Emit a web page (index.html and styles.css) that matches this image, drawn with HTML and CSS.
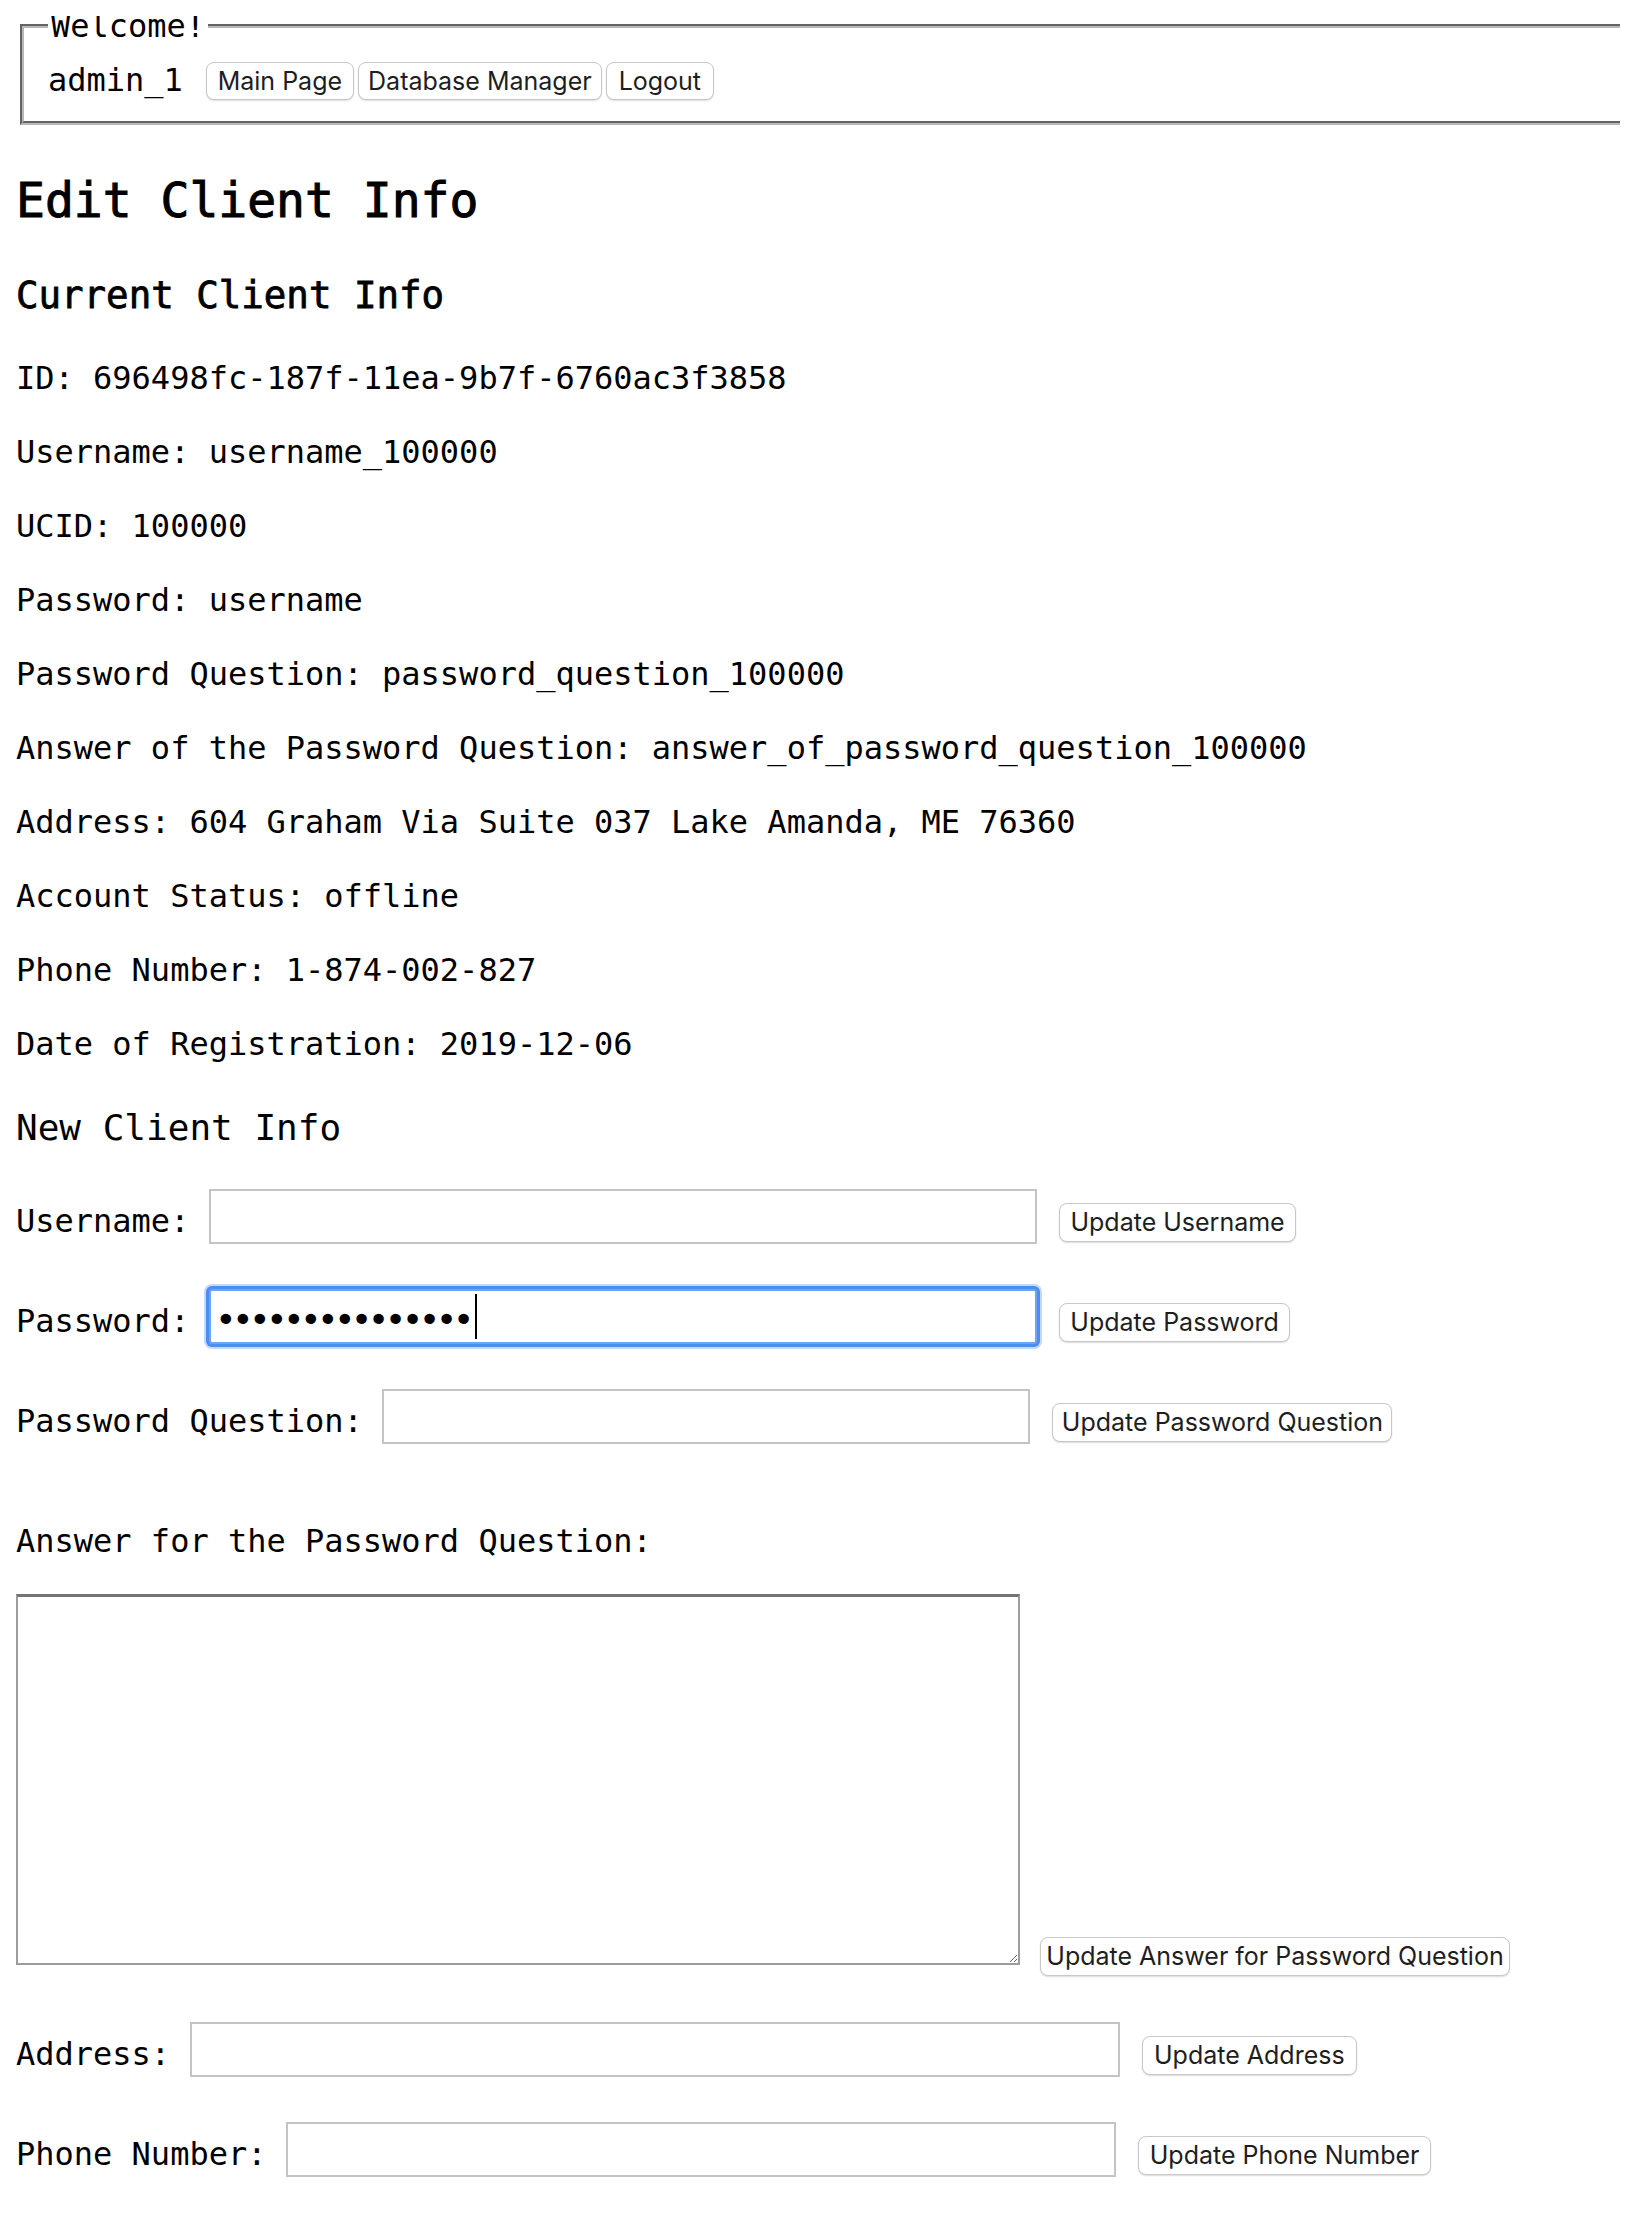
FILE: index.html
```html
<!DOCTYPE html>
<html lang="en">
<head>
<meta charset="utf-8">
<title>Edit Client Info</title>
<link rel="stylesheet" href="styles.css">
</head>
<body>
<fieldset class="welcome">
  <legend>Welcome!</legend>
  <div class="welcome-row">
    <span class="user">admin_1</span>
    <button class="btn nav-btn nav-main" type="button">Main Page</button>
    <button class="btn nav-btn nav-db" type="button">Database Manager</button>
    <button class="btn nav-btn nav-logout" type="button">Logout</button>
  </div>
</fieldset>

<h1 class="page-title">Edit Client Info</h1>

<h3 class="section-title">Current Client Info</h3>
<p class="info">ID: 696498fc-187f-11ea-9b7f-6760ac3f3858</p>
<p class="info">Username: username_100000</p>
<p class="info">UCID: 100000</p>
<p class="info">Password: username</p>
<p class="info">Password Question: password_question_100000</p>
<p class="info">Answer of the Password Question: answer_of_password_question_100000</p>
<p class="info">Address: 604 Graham Via Suite 037 Lake Amanda, ME 76360</p>
<p class="info">Account Status: offline</p>
<p class="info">Phone Number: 1-874-002-827</p>
<p class="info">Date of Registration: 2019-12-06</p>

<h3 class="section-title section-new">New Client Info</h3>

<div class="field-row">
  <label class="field-label" for="f-username">Username:</label>
  <input class="field-input w-username" id="f-username" type="text">
  <button class="btn field-btn b-username" type="button">Update Username</button>
</div>

<div class="field-row">
  <label class="field-label" for="f-password">Password:</label>
  <input class="field-input w-username is-focused" id="f-password" type="password" value="abcdefghijklmno">
  <button class="btn field-btn b-password" type="button">Update Password</button>
</div>

<div class="field-row">
  <label class="field-label" for="f-question">Password Question:</label>
  <input class="field-input w-question" id="f-question" type="text">
  <button class="btn field-btn b-question" type="button">Update Password Question</button>
</div>

<p class="answer-label">Answer for the Password Question:</p>
<div class="answer-row">
  <textarea class="answer-box" aria-label="Answer for the Password Question"></textarea>
  <button class="btn answer-btn" type="button">Update Answer for Password Question</button>
</div>

<div class="field-row">
  <label class="field-label" for="f-address">Address:</label>
  <input class="field-input w-address" id="f-address" type="text">
  <button class="btn field-btn b-address" type="button">Update Address</button>
</div>

<div class="field-row last-row">
  <label class="field-label" for="f-phone">Phone Number:</label>
  <input class="field-input w-phone" id="f-phone" type="text">
  <button class="btn field-btn b-phone" type="button">Update Phone Number</button>
</div>
</body>
</html>
```

FILE: styles.css
```css
html {
  overflow: hidden;
  scrollbar-width: none;
  background: #fff;
}

html::-webkit-scrollbar {
  display: none;
  width: 0;
  height: 0;
}

body {
  margin: 16px 16px 0 16px;
  font-family: "DejaVu Sans Mono", monospace;
  font-size: 32px;
  line-height: 42px;
  color: #000;
  background: #fff;
}

/* header fieldset */
.welcome {
  box-sizing: border-box;
  width: 1660px;
  margin: 0 0 0 4px;
  padding: 23px 22px 20px 24px;
  border: 4px groove #b8b8b8;
  min-width: 0;
}

.welcome legend {
  padding: 0 3px;
  font-size: 32px;
  line-height: 20px;
}

.welcome-row {
  display: flex;
  align-items: flex-start;
}

.user {
  margin-right: 23px;
}

/* buttons */
.btn {
  font-family: Inter, "Liberation Sans", Arial, sans-serif;
  font-size: 25px;
  line-height: 1;
  color: #1e1e1e;
  background: #fff;
  border: 1.5px solid #c8c8c8;
  border-radius: 8px;
  box-shadow: 0 1px 1.5px rgba(0, 0, 0, 0.14);
  box-sizing: border-box;
  padding: 0;
  margin: 0;
  text-align: center;
  white-space: nowrap;
}

.nav-btn {
  height: 38px;
  margin-top: 3px;
  margin-right: 4px;
}

.nav-main { width: 148px; }
.nav-db { width: 244px; }
.nav-logout { width: 108px; }

/* headings & info */
.page-title {
  font-size: 48px;
  line-height: 65px;
  font-weight: normal;
  -webkit-text-stroke: 1px #000;
  margin: 43px 0 0 0;
}

.section-title {
  font-size: 37.44px;
  line-height: 49px;
  font-weight: normal;
  -webkit-text-stroke: 0.8px #000;
  margin: 37.5px 0;
}

.section-new {
  font-size: 36px;
  -webkit-text-stroke: 0;
}

.info {
  margin: 32px 0;
}

/* form rows */
.field-row {
  display: flex;
  align-items: flex-start;
  height: 68px;
  margin: 32px 0;
}

.last-row {
  margin-bottom: 0;
}

.field-label {
  margin-top: 11px;
  margin-right: 19.7px;
  white-space: pre;
}

.field-input {
  height: 55px;
  box-sizing: border-box;
  border: 2px solid #c4c4c4;
  border-radius: 0;
  background: #fff;
  padding: 0 5px;
  margin: 0;
  font-family: "DejaVu Sans Mono", monospace;
  font-size: 28px;
  color: #000;
  outline: none;
}

.w-username { width: 828px; }
.w-question { width: 648px; }
.w-address { width: 930px; }
.w-phone { width: 830px; }

.is-focused {
  font-size: 36px;
  letter-spacing: -4.7px;
  padding: 6px 5px 0 4px;
  border-color: #6ea6f3;
  border-radius: 3px;
  box-shadow: 0 0 0 3px #4b8ef0, 0 0 0 5px rgba(90, 150, 240, 0.35);
  caret-color: transparent;
  background-image: linear-gradient(#000, #000);
  background-repeat: no-repeat;
  background-position: 264px 3px;
  background-size: 2px 45px;
}

.field-btn {
  height: 39px;
  margin-top: 14px;
  margin-left: 22px;
}

.b-username { width: 237px; }
.b-password { width: 231px; }
.b-question { width: 340px; }
.b-address { width: 215px; }
.b-phone { width: 293px; }

/* answer block */
.answer-label {
  margin: 63px 0 32px 0;
}

.answer-row {
  display: flex;
  align-items: flex-start;
  margin: 32px 0 46px 0;
}

.answer-box {
  width: 1004px;
  height: 371px;
  box-sizing: border-box;
  margin: 0;
  border: 2px solid #9c9c9c;
  border-top: 3px solid #747474;
  border-radius: 0;
  background: #fff;
  font-family: "DejaVu Sans Mono", monospace;
  font-size: 26px;
}

.answer-btn {
  width: 470px;
  height: 39px;
  margin-top: 343px;
  margin-left: 20px;
}
```
